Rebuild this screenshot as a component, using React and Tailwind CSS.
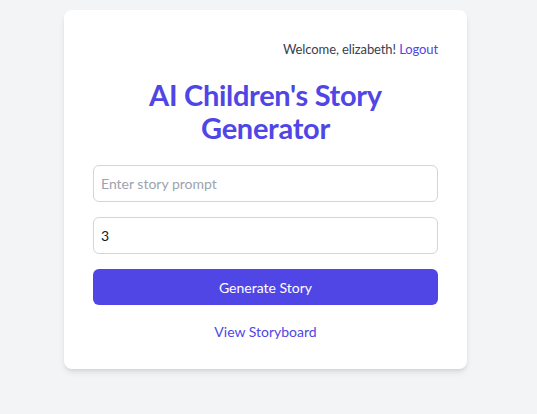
export default function App() {
  return (
    <div className="min-h-[414px] w-full bg-[#f3f4f6] pt-[10px]" style={{ fontFamily: 'Lato, sans-serif' }}>
      <div className="ml-[64px] w-[403px] h-[359px] rounded-lg bg-white shadow-md px-[29px] pt-[30px]">
        <div className="flex justify-end text-[13px] leading-[18px] tracking-[-0.1px] text-[#374151]">
          <span>Welcome, elizabeth!&nbsp;</span>
          <span className="text-[#4f46e5]">Logout</span>
        </div>
        <h1 className="mt-[20px] text-center text-[29px] leading-[33px] tracking-[-0.3px] font-bold text-[#4f46e5]">
          AI Children's Story Generator
        </h1>
        <div className="mt-[21px] flex flex-col gap-[15px]">
          <input
            className="h-[37px] w-full rounded-md border border-[#d1d5db] px-[7px] text-[14px] text-[#111827] placeholder:text-[#9ca3af] outline-none"
            placeholder="Enter story prompt"
          />
          <input
            className="h-[37px] w-full rounded-md border border-[#d1d5db] px-[7px] text-[14px] text-[#111827] outline-none"
            defaultValue="3"
          />
          <button className="h-[36px] w-full rounded-md bg-[#4f46e5] text-[14px] text-white">Generate Story</button>
        </div>
        <div className="mt-[16px] text-center text-[14px] text-[#4f46e5]">View Storyboard</div>
      </div>
    </div>
  );
}
